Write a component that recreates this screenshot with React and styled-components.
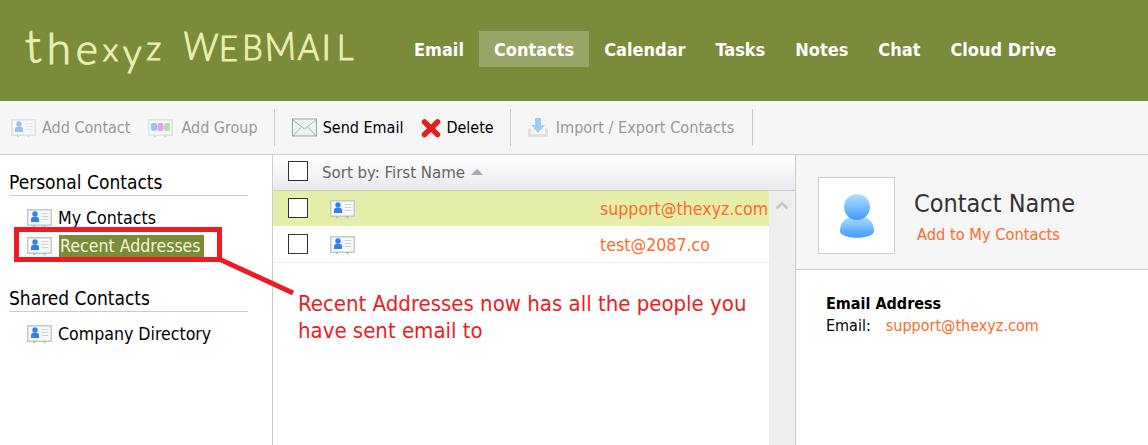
import React from 'react';
import styled, { createGlobalStyle } from 'styled-components';

const GlobalStyle = createGlobalStyle`
  html, body { margin: 0; padding: 0; background: #fff; }
  body {
    font-family: "DejaVu Sans", "Noto Sans", sans-serif;
    font-stretch: condensed;
    overflow: hidden;
  }
`;

const Page = styled.div`
  position: relative;
  width: 1148px;
  height: 445px;
  overflow: hidden;
`;

const Header = styled.header`
  display: flex;
  align-items: flex-start;
  height: 101px;
  background: #7a8b3a;
`;

const Logo = styled.div`
  display: flex;
  align-items: baseline;
  width: 399px;
  height: 70px;
  padding: 15px 0 0 25px;
  box-sizing: border-box;
  color: #e9efb0;
  font-family: "Lato", "Open Sans", sans-serif;
  font-stretch: normal;
  font-weight: 300;
  -webkit-text-stroke: 1.2px #e9efb0;
`;

const LogoLetter = styled.span`
  display: inline-block;
  font-size: ${(p) => p.$size}px;
  margin-right: ${(p) => p.$gap}px;
  transform: translateY(${(p) => p.$y}px) rotate(${(p) => p.$r}deg) scaleX(${(p) => p.$sx});
`;

const Nav = styled.nav`
  display: flex;
  margin-top: 31px;
`;

const NavItem = styled.a`
  display: flex;
  align-items: center;
  height: 36px;
  padding: 0 15px;
  color: #fff;
  font-size: 18px;
  font-weight: 700;
  background: ${(p) => (p.$active ? '#97a567' : 'transparent')};
`;

const Toolbar = styled.div`
  display: flex;
  align-items: center;
  height: 53px;
  padding-left: 11px;
  background: #f6f6f6;
  border-bottom: 1px solid #ccc;
`;

const ToolButton = styled.div`
  display: flex;
  align-items: center;
  gap: ${(p) => p.$gap || 7}px;
  margin-right: ${(p) => p.$right || 0}px;
  font-size: ${(p) => p.$size || 16}px;
  color: ${(p) => (p.$disabled ? '#999' : '#000')};
  svg { opacity: ${(p) => (p.$disabled ? 0.45 : 1)}; }
`;

const ToolSeparator = styled.div`
  width: 1px;
  height: 37px;
  margin: 0 ${(p) => p.$right}px 0 ${(p) => p.$left}px;
  background: #ccc;
`;

const Main = styled.div`
  display: flex;
  height: 290px;
`;

const Sidebar = styled.aside`
  flex: none;
  width: 273px;
  padding: 15px 24px 0 9px;
  box-sizing: border-box;
  border-right: 1px solid #ccc;
`;

const GroupTitle = styled.h3`
  margin: ${(p) => p.$top || 0}px 0 8px;
  height: 25px;
  line-height: 24px;
  font-size: 19px;
  font-weight: 400;
  color: #000;
  border-bottom: 1px solid #ccc;
`;

const Folder = styled.div`
  display: flex;
  align-items: center;
  gap: 7px;
  height: 28px;
  padding-left: 18px;
  font-size: 17.6px;
  color: #000;
`;

const FolderLabel = styled.span`
  margin-left: ${(p) => (p.$selected ? 0 : -1)}px;
  padding: 1px ${(p) => (p.$selected ? '3px 1px 1px' : '0')};
  line-height: 21px;
  color: ${(p) => (p.$selected ? '#f4f7dc' : '#000')};
  background: ${(p) => (p.$selected ? '#7a8b3a' : 'transparent')};
`;

const ListPane = styled.section`
  display: flex;
  flex-direction: column;
  width: 522px;
  flex: none;
  border-right: 1px solid #ccc;
`;

const SortBar = styled.div`
  display: flex;
  align-items: center;
  gap: 14px;
  height: 34px;
  padding: 0 0 1px 15px;
  background: linear-gradient(#fff, #e8eaee);
  border-bottom: 1px solid #ccc;
  color: #666;
  font-size: 16.7px;
`;

const Checkbox = styled.span`
  display: block;
  width: 18px;
  height: 18px;
  flex: none;
  margin-bottom: 2px;
  background: #fff;
  border: 1px solid #333;
`;

const SortArrow = styled.span`
  width: 0;
  height: 0;
  margin-left: -8px;
  border: 6px solid transparent;
  border-top: 0;
  border-bottom: 6px solid #aaa;
`;

const ListBody = styled.div`
  display: flex;
  flex: 1;
`;

const Rows = styled.div`
  flex: 1;
`;

const Row = styled.div`
  display: flex;
  align-items: center;
  height: 35px;
  padding-left: 15px;
  background: ${(p) => (p.$highlight ? '#e6efa9' : '#fff')};
  border-bottom: 1px solid ${(p) => (p.$highlight ? '#fff' : '#eee')};
`;

const RowIcon = styled.span`
  display: flex;
  margin-left: 22px;
`;

const RowEmail = styled.a`
  margin-left: 245px;
  color: #ff6a2b;
  font-size: 17.6px;
`;

const ScrollTrack = styled.div`
  display: flex;
  justify-content: center;
  width: 26px;
  padding-top: 10px;
  box-sizing: border-box;
  background: #eee;
`;

const DetailPane = styled.section`
  flex: 1;
`;

const DetailHead = styled.div`
  display: flex;
  align-items: flex-start;
  gap: 19px;
  height: 92px;
  padding: 22px 0 0 22px;
  background: #f6f6f6;
  border-bottom: 1px solid #ccc;
`;

const Avatar = styled.div`
  display: flex;
  align-items: center;
  justify-content: center;
  width: 75px;
  height: 75px;
  background: #fff;
  border: 1px solid #ccc;
`;

const ContactInfo = styled.div`
  padding-top: 11px;
`;

const ContactName = styled.div`
  font-size: 25px;
  line-height: 32px;
  color: #333;
`;

const AddLink = styled.a`
  display: block;
  margin: 4px 0 0 3px;
  font-size: 16.3px;
  line-height: 22px;
  color: #ff6a2b;
`;

const DetailBody = styled.div`
  padding: 23px 0 0 30px;
  font-size: 16px;
  line-height: 22px;
  color: #000;
`;

const DetailTitle = styled.div`
  font-weight: 700;
`;

const DetailValue = styled.a`
  margin-left: 15px;
  color: #ff6a2b;
`;

// red annotation drawn on top of the screenshot
const CalloutBox = styled.div`
  position: absolute;
  left: 14px;
  top: 227px;
  width: 198px;
  height: 25px;
  border: 5px solid #ed1c24;
`;

const CalloutLine = styled.svg`
  position: absolute;
  left: 215px;
  top: 255px;
`;

const CalloutText = styled.div`
  position: absolute;
  left: 298px;
  top: 290px;
  width: 480px;
  font-size: 22px;
  line-height: 27px;
  color: #ed1c24;
`;

const CardIcon = () => (
  <svg width="25" height="20" viewBox="0 0 25 20">
    <rect x="0.75" y="1.75" width="23.5" height="15.5" fill="#f7f9fa" stroke="#c2cbcb" strokeWidth="1.5" />
    <circle cx="8" cy="6" r="2.7" fill="#2f7ff0" />
    <path d="M4 14 V10.5 C4 8 12 8 12 10.5 V14 Z" fill="#2f7ff0" />
    <path d="M14.5 5.5h7M14.5 8.5h7M14.5 11.5h7" stroke="#cdd5d8" />
    <path d="M5.5 17.5h3l-1.5 2zM16 17.5h3l-1.5 2z" fill="#9da8a9" />
  </svg>
);

const GroupIcon = () => (
  <svg width="25" height="20" viewBox="0 0 25 20">
    <rect x="0.75" y="1.75" width="23.5" height="15.5" fill="#f7f9fa" stroke="#c2cbcb" strokeWidth="1.5" />
    <rect x="3" y="5" width="6" height="8" rx="2" fill="#2f7ff0" />
    <rect x="9.5" y="5" width="6" height="8" rx="2" fill="#c03fe0" />
    <rect x="16" y="5" width="6" height="8" rx="2" fill="#6cc04a" />
    <path d="M5.5 17.5h3l-1.5 2zM16 17.5h3l-1.5 2z" fill="#9da8a9" />
  </svg>
);

const MailIcon = () => (
  <svg width="25" height="20" viewBox="0 0 25 20">
    <rect x="0.5" y="1" width="24" height="17" fill="#eef2f1" stroke="#8fa5a2" />
    <path d="M1 2l11.5 9L24 2M1 18l8.5-9.5M24 18l-8.5-9.5" fill="none" stroke="#a9bab8" />
  </svg>
);

const DeleteIcon = () => (
  <svg width="20" height="20" viewBox="0 0 20 20">
    <path d="M3.5 4 L16.5 16.5 M16.5 4 L3.5 16.5" stroke="#e0201f" strokeWidth="5.5" strokeLinecap="round" />
  </svg>
);

const ImportIcon = () => (
  <svg width="22" height="22" viewBox="0 0 22 22">
    <path d="M1 12v8h20v-8l-3-1v6H4v-6z" fill="#c5ccd0" />
    <path d="M8 1h6v7h4l-7 8-7-8h4z" fill="#3f9bee" />
  </svg>
);

const PersonIcon = () => (
  <svg width="36" height="44" viewBox="0 0 36 44">
    <defs>
      <linearGradient id="personFill" x1="0" y1="0" x2="0" y2="1">
        <stop offset="0" stopColor="#b4e0ff" />
        <stop offset="1" stopColor="#3f9bfb" />
      </linearGradient>
    </defs>
    <path d="M1 37 C1 27 8 22 18 22 C28 22 35 27 35 37 C35 46 1 46 1 37 Z" fill="url(#personFill)" />
    <circle cx="18" cy="13" r="13" fill="url(#personFill)" />
  </svg>
);

const ChevronUp = () => (
  <svg width="14" height="9" viewBox="0 0 14 9">
    <path d="M1.5 7.5 L7 2 L12.5 7.5" fill="none" stroke="#c4c4c4" strokeWidth="2.5" />
  </svg>
);

const logoLetters = [
  ['t', 46, 6, 2, -3, 1], ['h', 44, 5, 4, 0, 1], ['e', 42, 5, 4, 3, 1], ['x', 32, 5, 1, 0, 1],
  ['y', 37, 5, 6, 0, 1], ['z', 33, 20, 0, 0, 1], ['W', 38, -2, 0, 4, 0.9], ['E', 36, 2, 1, 0, 0.9],
  ['B', 36, 0, 0, 0, 0.9], ['M', 38, -1, 0, -3, 0.9], ['A', 36, 1, 0, 2, 0.9], ['I', 36, 5, 0, 0, 1],
  ['L', 36, 0, 0, 0, 0.9],
];

const navItems = ['Email', 'Contacts', 'Calendar', 'Tasks', 'Notes', 'Chat', 'Cloud Drive'];

const App = () => {
  return (
    <Page>
      <GlobalStyle />
      <Header>
        <Logo>
          {logoLetters.map(([ch, size, gap, y, r, sx], i) => (
            <LogoLetter key={i} $size={size} $gap={gap} $y={y} $r={r} $sx={sx}>{ch}</LogoLetter>
          ))}
        </Logo>
        <Nav>
          {navItems.map((item) => (
            <NavItem key={item} $active={item === 'Contacts'}>{item}</NavItem>
          ))}
        </Nav>
      </Header>

      <Toolbar>
        <ToolButton $disabled $right={18} $gap={6}><CardIcon />Add Contact</ToolButton>
        <ToolButton $disabled $gap={8}><GroupIcon />Add Group</ToolButton>
        <ToolSeparator $left={16} $right={17} />
        <ToolButton $right={18} $gap={6}><MailIcon />Send Email</ToolButton>
        <ToolButton $gap={5}><DeleteIcon />Delete</ToolButton>
        <ToolSeparator $left={16} $right={16} />
        <ToolButton $disabled $size={16.15}><ImportIcon />Import / Export Contacts</ToolButton>
        <ToolSeparator $left={18} $right={0} />
      </Toolbar>

      <Main>
        <Sidebar>
          <GroupTitle>Personal Contacts</GroupTitle>
          <Folder><CardIcon /><FolderLabel>My Contacts</FolderLabel></Folder>
          <Folder><CardIcon /><FolderLabel $selected>Recent Addresses</FolderLabel></Folder>
          <GroupTitle $top={26}>Shared Contacts</GroupTitle>
          <Folder><CardIcon /><FolderLabel>Company Directory</FolderLabel></Folder>
        </Sidebar>

        <ListPane>
          <SortBar>
            <Checkbox />
            Sort by: First Name
            <SortArrow />
          </SortBar>
          <ListBody>
            <Rows>
              <Row $highlight>
                <Checkbox />
                <RowIcon><CardIcon /></RowIcon>
                <RowEmail>support@thexyz.com</RowEmail>
              </Row>
              <Row>
                <Checkbox />
                <RowIcon><CardIcon /></RowIcon>
                <RowEmail>test@2087.co</RowEmail>
              </Row>
            </Rows>
            <ScrollTrack><ChevronUp /></ScrollTrack>
          </ListBody>
        </ListPane>

        <DetailPane>
          <DetailHead>
            <Avatar><PersonIcon /></Avatar>
            <ContactInfo>
              <ContactName>Contact Name</ContactName>
              <AddLink>Add to My Contacts</AddLink>
            </ContactInfo>
          </DetailHead>
          <DetailBody>
            <DetailTitle>Email Address</DetailTitle>
            <div>Email:<DetailValue>support@thexyz.com</DetailValue></div>
          </DetailBody>
        </DetailPane>
      </Main>

      <CalloutBox />
      <CalloutLine width="85" height="45" viewBox="0 0 85 45">
        <path d="M4 4 L78 38" stroke="#ed1c24" strokeWidth="5" />
      </CalloutLine>
      <CalloutText>
        Recent Addresses now has all the people you
        <br />
        have sent email to
      </CalloutText>
    </Page>
  );
};

export default App;
